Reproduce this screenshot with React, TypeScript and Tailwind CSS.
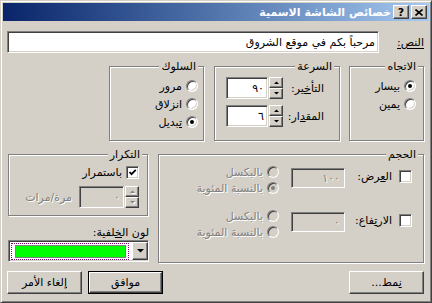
import React from 'react';

const sunken =
  'border border-t-[#808080] border-l-[#808080] border-b-white border-r-white shadow-[inset_1px_1px_0_#404040,inset_-1px_-1px_0_#d4d0c8]';
const raised =
  'border border-t-white border-l-white border-b-[#404040] border-r-[#404040] shadow-[inset_-1px_-1px_0_#808080]';
const etched = 'border border-[#808080] shadow-[inset_1px_1px_0_#fff,1px_1px_0_#fff]';
const dim = 'text-[#808080] [text-shadow:1px_1px_0_#fff]';

function Group({ title, className, children }: { title: string; className: string; children: React.ReactNode }) {
  return (
    <div className={`relative ${etched} ${className}`}>
      <span className="absolute -top-[7px] right-[5px] bg-[#d4d0c8] px-[2px] leading-[13px]">{title}</span>
      {children}
    </div>
  );
}

function Radio({ checked, disabled }: { checked?: boolean; disabled?: boolean }) {
  return (
    <span
      className={`inline-flex w-[12px] h-[12px] shrink-0 rounded-full items-center justify-center ${
        disabled ? 'bg-[#d4d0c8]' : 'bg-white'
      } border border-t-[#808080] border-l-[#808080] border-b-white border-r-white shadow-[inset_1px_1px_0_#404040,inset_-1px_-1px_0_#d4d0c8]`}
    >
      {checked && <span className={`w-[4px] h-[4px] rounded-full ${disabled ? 'bg-[#808080]' : 'bg-black'}`} />}
    </span>
  );
}

function Check({ checked }: { checked?: boolean }) {
  return (
    <span className={`inline-flex w-[13px] h-[13px] shrink-0 items-center justify-center bg-white ${sunken}`}>
      {checked && (
        <svg width="9" height="9" viewBox="0 0 9 9">
          <path d="M1.5 4 L3.5 6.2 L7.8 1.8" stroke="#000" strokeWidth="1.8" fill="none" />
        </svg>
      )}
    </span>
  );
}

function Arrow({ up, disabled }: { up?: boolean; disabled?: boolean }) {
  return (
    <svg width="5" height="3" viewBox="0 0 5 3" className={disabled ? 'drop-shadow-[1px_1px_0_#fff]' : ''}>
      <polygon points={up ? '0,3 5,3 2.5,0.5' : '0,0 5,0 2.5,2.5'} fill={disabled ? '#808080' : '#000'} />
    </svg>
  );
}

function SpinField({ value, disabled, w }: { value: string; disabled?: boolean; w: string }) {
  return (
    <div dir="ltr" className="flex h-[22px]">
      <div className={`${w} h-full ${sunken} ${disabled ? 'bg-[#d4d0c8]' : 'bg-white'} flex items-center justify-end pr-[3px]`}>
        <span className={disabled ? dim : ''}>{value}</span>
      </div>
      <div className="w-[14px] h-full flex flex-col ml-[1px]">
        <div className={`flex-1 bg-[#d4d0c8] ${raised} flex items-center justify-center`}>
          <Arrow up disabled={disabled} />
        </div>
        <div className={`flex-1 bg-[#d4d0c8] ${raised} flex items-center justify-center`}>
          <Arrow disabled={disabled} />
        </div>
      </div>
    </div>
  );
}

function RadioRow({ label, checked, disabled, h }: { label: React.ReactNode; checked?: boolean; disabled?: boolean; h: string }) {
  return (
    <div className={`flex items-center ${h} gap-[4px] whitespace-nowrap`}>
      <Radio checked={checked} disabled={disabled} />
      <span className={disabled ? dim : ''}>{label}</span>
    </div>
  );
}

function SizeRow({ label, value, second }: { label: React.ReactNode; value: string; second: boolean }) {
  return (
    <div className="flex items-start">
      <div className="mt-[6px]">
        <Check />
      </div>
      <span className="ms-[7px] w-[47px] mt-[6px] leading-[13px] whitespace-nowrap">{label}</span>
      <div className={`mt-[4px] w-[54px] h-[20px] ${sunken} bg-[#d4d0c8] flex items-center justify-end pr-[4px] ps-[3px]`} dir="ltr">
        <span className={dim}>{value}</span>
      </div>
      <div className="ms-[12px] flex flex-col">
        <RadioRow h="h-[16px]" label="بالبكسل" disabled />
        <RadioRow h="h-[16px]" label="بالنسبة المئوية" disabled checked={!second} />
      </div>
    </div>
  );
}

function Button({ children, def, w }: { children: React.ReactNode; def?: boolean; w: string }) {
  const inner = (
    <div className={`h-full w-full bg-[#d4d0c8] ${raised} flex items-center justify-center`}>{children}</div>
  );
  return <div className={`${w} h-[23px] ${def ? 'border border-black' : ''}`}>{inner}</div>;
}

export default function App() {
  return (
    <div
      dir="rtl"
      className="w-[432px] h-[303px] bg-[#d4d0c8] border border-t-[#d4d0c8] border-l-[#d4d0c8] border-b-[#404040] border-r-[#404040] shadow-[inset_1px_1px_0_#fff,inset_-1px_-1px_0_#808080] p-[2px] flex flex-col text-[11px] text-black font-['DejaVu_Sans',sans-serif] leading-[13px]"
    >
      {/* Title bar */}
      <div className="h-[18px] bg-linear-to-r from-[#0a246a] to-[#a6caf0] flex items-center pr-[2px]">
        <div dir="ltr" className="flex gap-[2px]">
          <div className={`w-[16px] h-[14px] bg-[#d4d0c8] ${raised} flex items-center justify-center font-bold text-[11px] leading-none`}>
            ?
          </div>
          <div className={`w-[16px] h-[14px] bg-[#d4d0c8] ${raised} flex items-center justify-center`}>
            <svg width="8" height="7" viewBox="0 0 8 7">
              <path d="M0.5 0.5 L7.5 6.5 M7.5 0.5 L0.5 6.5" stroke="#000" strokeWidth="1.6" />
            </svg>
          </div>
        </div>
        <span className="ms-[2px] text-white font-bold">خصائص الشاشة الاسمية</span>
      </div>

      <div className="flex flex-col pl-[4px] pr-[5px]">
        {/* Text row */}
        <div className="mt-[10px] h-[22px] flex items-center justify-between">
          <span className="underline decoration-1 underline-offset-2">النص:</span>
          <div className={`w-[372px] h-[22px] bg-white ${sunken} flex items-center pr-[3px]`}>
            مرحباً بكم في موقع الشروق
          </div>
        </div>

        {/* Direction / speed / behaviour */}
        <div className="mt-[13px] h-[75px] flex">
          <Group title="الاتجاه" className="w-[75px] h-[75px] pt-[10px] pr-[7px]">
            <RadioRow h="h-[18px]" checked label={<><u>ب</u>يسار</>} />
            <RadioRow h="h-[18px]" label={<><u>ي</u>مين</>} />
          </Group>
          <Group title="السرعة" className="ms-[9px] w-[126px] h-[75px] pt-[10px] pr-[15px] pl-[11px] flex flex-col gap-[6px]">
            <div className="flex items-center justify-between h-[22px]">
              <span>
                التأ<u>خ</u>ير:
              </span>
              <SpinField value="٩٠" w="w-[42px]" />
            </div>
            <div className="flex items-center justify-between h-[22px]">
              <span>
                المق<u>د</u>ار:
              </span>
              <SpinField value="٦" w="w-[42px]" />
            </div>
          </Group>
          <Group title="السلوك" className="ms-[10px] w-[95px] h-[75px] pt-[10px] pr-[5px]">
            <RadioRow h="h-[18px]" label="مرور" />
            <RadioRow h="h-[18px]" label="انزلاق" />
            <RadioRow h="h-[18px]" checked label={<><u>ت</u>بديل</>} />
          </Group>
        </div>

        {/* Size / repeat / background */}
        <div className="mt-[13px] h-[109px] flex">
          <Group title="الحجم" className="w-[266px] h-[109px] pt-[9px] pr-[11px] flex flex-col gap-[12px]">
            <SizeRow label={<>ال<u>ع</u>رض:</>} value="١٠٠" second={false} />
            <SizeRow label={<>الار<u>ت</u>فاع:</>} value="٠" second />
          </Group>
          <div className="ms-[9px] w-[141px] flex flex-col">
            <Group title="التكرار" className="self-end w-[140px] h-[62px] pt-[11px] pr-[8px]">
              <div className="flex items-center gap-[4px] h-[13px]">
                <Check checked />
                <span>
                  <u>ب</u>استمرار
                </span>
              </div>
              <div className="mt-[7px] flex items-center gap-[7px]">
                <SpinField value="٠" disabled w="w-[45px]" />
                <span className={dim}>مرة/مرات</span>
              </div>
            </Group>
            <span className="mt-[10px] leading-[13px]">
              لون ال<u>خ</u>لفية:
            </span>
            <div dir="ltr" className={`mt-[1px] h-[22px] bg-white ${sunken} flex items-center pl-[2px] pr-0`}>
              <div className="w-[118px] h-[17px] border border-dotted border-[#800080] flex items-center pl-[3px] pr-[1px]">
                <div className="w-[111px] h-[13px] bg-[#00ff00] border border-[#808080]" />
              </div>
              <div className={`ml-auto w-[16px] h-[18px] bg-[#d4d0c8] ${raised} flex items-center justify-center`}>
                <svg width="7" height="4" viewBox="0 0 7 4">
                  <polygon points="0,0 7,0 3.5,3.5" fill="#000" />
                </svg>
              </div>
            </div>
          </div>
        </div>

        {/* Buttons */}
        <div className="mt-[8px] flex items-center">
          <Button w="w-[75px]">
            <span>
              <u>ن</u>مط...
            </span>
          </Button>
          <div className="ms-auto">
            <Button def w="w-[75px]">
              موافق
            </Button>
          </div>
          <div className="ms-[6px]">
            <Button w="w-[75px]">
              <span>
                <u>إ</u>لغاء الأمر
              </span>
            </Button>
          </div>
        </div>
      </div>
    </div>
  );
}
